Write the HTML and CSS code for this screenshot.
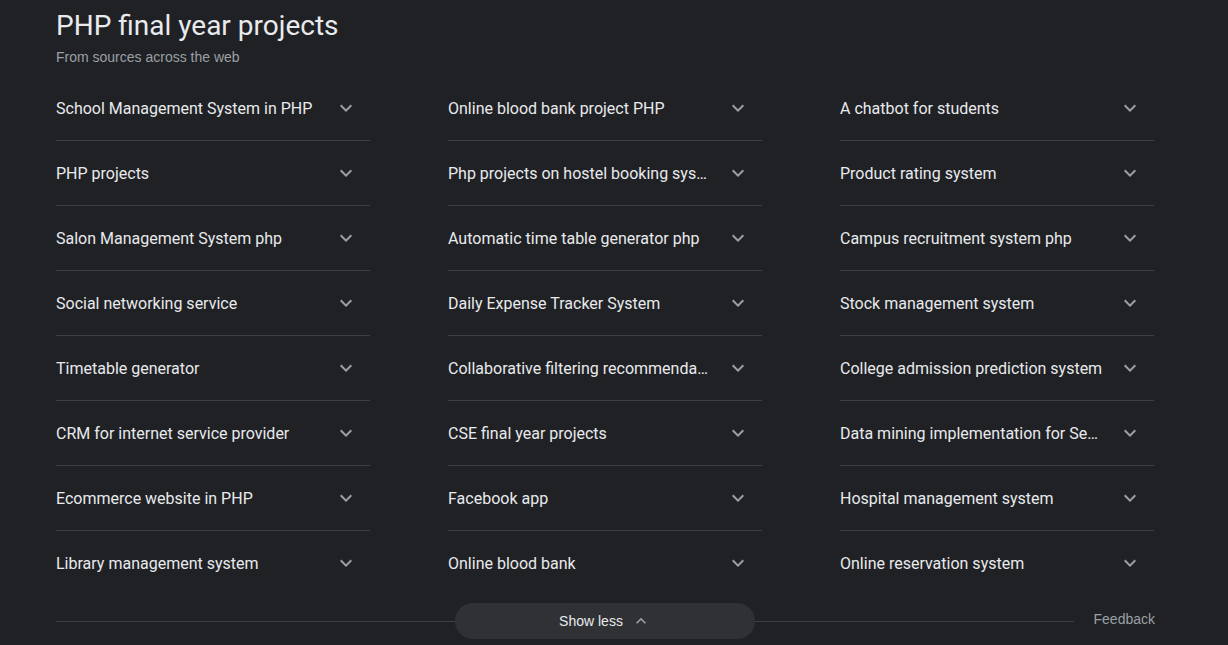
FILE: index.html
```html
<!DOCTYPE html>
<html>
<head>
<meta charset="utf-8">
<link rel="stylesheet" href="styles.css">
</head>
<body>
<div class="wrap">
  <h1 class="title">PHP final year projects</h1>
  <div class="sub">From sources across the web</div>
  <div class="grid">
    <div class="col">
      <div class="row"><span class="txt">School Management System in PHP</span><svg class="chev" viewBox="0 0 24 24"><path d="M7.41 8.59 12 13.17l4.59-4.58L18 10l-6 6-6-6z"/></svg></div>
      <div class="row"><span class="txt">PHP projects</span><svg class="chev" viewBox="0 0 24 24"><path d="M7.41 8.59 12 13.17l4.59-4.58L18 10l-6 6-6-6z"/></svg></div>
      <div class="row"><span class="txt">Salon Management System php</span><svg class="chev" viewBox="0 0 24 24"><path d="M7.41 8.59 12 13.17l4.59-4.58L18 10l-6 6-6-6z"/></svg></div>
      <div class="row"><span class="txt">Social networking service</span><svg class="chev" viewBox="0 0 24 24"><path d="M7.41 8.59 12 13.17l4.59-4.58L18 10l-6 6-6-6z"/></svg></div>
      <div class="row"><span class="txt">Timetable generator</span><svg class="chev" viewBox="0 0 24 24"><path d="M7.41 8.59 12 13.17l4.59-4.58L18 10l-6 6-6-6z"/></svg></div>
      <div class="row"><span class="txt">CRM for internet service provider</span><svg class="chev" viewBox="0 0 24 24"><path d="M7.41 8.59 12 13.17l4.59-4.58L18 10l-6 6-6-6z"/></svg></div>
      <div class="row"><span class="txt">Ecommerce website in PHP</span><svg class="chev" viewBox="0 0 24 24"><path d="M7.41 8.59 12 13.17l4.59-4.58L18 10l-6 6-6-6z"/></svg></div>
      <div class="row last"><span class="txt">Library management system</span><svg class="chev" viewBox="0 0 24 24"><path d="M7.41 8.59 12 13.17l4.59-4.58L18 10l-6 6-6-6z"/></svg></div>
    </div>
    <div class="col">
      <div class="row"><span class="txt">Online blood bank project PHP</span><svg class="chev" viewBox="0 0 24 24"><path d="M7.41 8.59 12 13.17l4.59-4.58L18 10l-6 6-6-6z"/></svg></div>
      <div class="row"><span class="txt">Php projects on hostel booking system</span><svg class="chev" viewBox="0 0 24 24"><path d="M7.41 8.59 12 13.17l4.59-4.58L18 10l-6 6-6-6z"/></svg></div>
      <div class="row"><span class="txt">Automatic time table generator php</span><svg class="chev" viewBox="0 0 24 24"><path d="M7.41 8.59 12 13.17l4.59-4.58L18 10l-6 6-6-6z"/></svg></div>
      <div class="row"><span class="txt">Daily Expense Tracker System</span><svg class="chev" viewBox="0 0 24 24"><path d="M7.41 8.59 12 13.17l4.59-4.58L18 10l-6 6-6-6z"/></svg></div>
      <div class="row"><span class="txt">Collaborative filtering recommendation system</span><svg class="chev" viewBox="0 0 24 24"><path d="M7.41 8.59 12 13.17l4.59-4.58L18 10l-6 6-6-6z"/></svg></div>
      <div class="row"><span class="txt">CSE final year projects</span><svg class="chev" viewBox="0 0 24 24"><path d="M7.41 8.59 12 13.17l4.59-4.58L18 10l-6 6-6-6z"/></svg></div>
      <div class="row"><span class="txt">Facebook app</span><svg class="chev" viewBox="0 0 24 24"><path d="M7.41 8.59 12 13.17l4.59-4.58L18 10l-6 6-6-6z"/></svg></div>
      <div class="row last"><span class="txt">Online blood bank</span><svg class="chev" viewBox="0 0 24 24"><path d="M7.41 8.59 12 13.17l4.59-4.58L18 10l-6 6-6-6z"/></svg></div>
    </div>
    <div class="col">
      <div class="row"><span class="txt">A chatbot for students</span><svg class="chev" viewBox="0 0 24 24"><path d="M7.41 8.59 12 13.17l4.59-4.58L18 10l-6 6-6-6z"/></svg></div>
      <div class="row"><span class="txt">Product rating system</span><svg class="chev" viewBox="0 0 24 24"><path d="M7.41 8.59 12 13.17l4.59-4.58L18 10l-6 6-6-6z"/></svg></div>
      <div class="row"><span class="txt">Campus recruitment system php</span><svg class="chev" viewBox="0 0 24 24"><path d="M7.41 8.59 12 13.17l4.59-4.58L18 10l-6 6-6-6z"/></svg></div>
      <div class="row"><span class="txt">Stock management system</span><svg class="chev" viewBox="0 0 24 24"><path d="M7.41 8.59 12 13.17l4.59-4.58L18 10l-6 6-6-6z"/></svg></div>
      <div class="row"><span class="txt">College admission prediction system</span><svg class="chev" viewBox="0 0 24 24"><path d="M7.41 8.59 12 13.17l4.59-4.58L18 10l-6 6-6-6z"/></svg></div>
      <div class="row"><span class="txt">Data mining implementation for Sentiment analysis</span><svg class="chev" viewBox="0 0 24 24"><path d="M7.41 8.59 12 13.17l4.59-4.58L18 10l-6 6-6-6z"/></svg></div>
      <div class="row"><span class="txt">Hospital management system</span><svg class="chev" viewBox="0 0 24 24"><path d="M7.41 8.59 12 13.17l4.59-4.58L18 10l-6 6-6-6z"/></svg></div>
      <div class="row last"><span class="txt">Online reservation system</span><svg class="chev" viewBox="0 0 24 24"><path d="M7.41 8.59 12 13.17l4.59-4.58L18 10l-6 6-6-6z"/></svg></div>
    </div>
  </div>
  <div class="footer">
    <div class="line"></div>
    <button class="less">Show less<svg class="up" viewBox="0 0 24 24"><path d="M7.41 15.41 12 10.83l4.59 4.58L18 14l-6-6-6 6z"/></svg></button>
    <div class="line grow"></div>
    <a class="fb">Feedback</a>
  </div>
</div>
</body>
</html>
```
FILE: styles.css
```css
html, body {
  margin: 0;
  background: #202124;
}
.wrap {
  width: 1099px;
  padding-left: 56px;
  font-family: Roboto, "Liberation Sans", Arial, sans-serif;
  color: #e8eaed;
}
.title {
  margin: 0;
  padding-top: 8px;
  font-size: 28px;
  font-weight: 400;
  line-height: 36px;
  color: #e8eaed;
}
.sub {
  font-family: "Liberation Sans", Arial, sans-serif;
  font-size: 14px;
  line-height: 20px;
  margin-top: 3px;
  color: #9aa0a6;
}
.grid {
  display: grid;
  grid-template-columns: repeat(3, 314px);
  column-gap: 78px;
  margin-top: 9px;
}
.row {
  height: 64px;
  border-bottom: 1px solid #3c4043;
  display: flex;
  align-items: center;
  padding-right: 12px;
}
.row.last {
  border-bottom: none;
}
.txt {
  flex: 1;
  min-width: 0;
  white-space: nowrap;
  overflow: hidden;
  text-overflow: ellipsis;
  font-size: 16px;
  padding-right: 14px;
}
.chev {
  width: 24px;
  height: 24px;
  fill: #9aa0a6;
  flex: none;
}
.footer {
  display: flex;
  align-items: center;
  margin-top: 8px;
  height: 36px;
}
.line {
  flex: none;
  width: 399px;
  height: 1px;
  background: #3c4043;
}
.line.grow {
  flex: 1;
  width: auto;
}
.less {
  flex: none;
  width: 300px;
  height: 36px;
  border: none;
  border-radius: 18px;
  background: #303134;
  color: #e8eaed;
  font-family: "Liberation Sans", Arial, sans-serif;
  font-size: 14px;
  display: flex;
  align-items: center;
  justify-content: center;
  gap: 8px;
  padding: 0;
}
.up {
  width: 20px;
  height: 20px;
  fill: #9aa0a6;
}
.fb {
  flex: none;
  margin-left: 20px;
  font-family: "Liberation Sans", Arial, sans-serif;
  font-size: 14px;
  color: #9aa0a6;
  margin-top: -4px;
}
```
